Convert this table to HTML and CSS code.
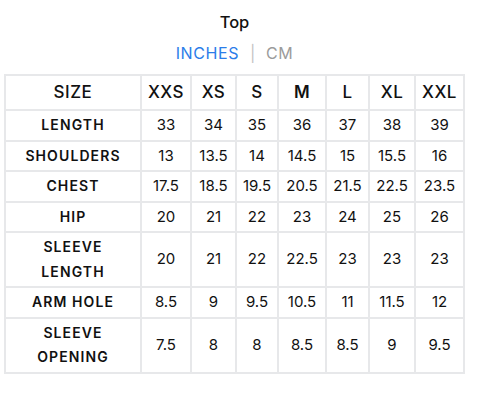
FILE: index.html
```html
<!DOCTYPE html>
<html>
<head>
<meta charset="utf-8">
<link rel="stylesheet" href="styles.css">
</head>
<body>
<div class="chart">
  <h1 class="title">Top</h1>
  <div class="units"><span class="unit active">INCHES</span><span class="sep">|</span><span class="unit">CM</span></div>
  <table class="sizes">
    <colgroup>
      <col class="c0"><col class="c1"><col class="c2"><col class="c3"><col class="c4"><col class="c5"><col class="c6"><col class="c7">
    </colgroup>
    <thead>
      <tr><th>SIZE</th><th>XXS</th><th>XS</th><th>S</th><th class="strong">M</th><th>L</th><th>XL</th><th>XXL</th></tr>
    </thead>
    <tbody>
      <tr><th>LENGTH</th><td>33</td><td>34</td><td>35</td><td>36</td><td>37</td><td>38</td><td>39</td></tr>
      <tr><th>SHOULDERS</th><td>13</td><td>13.5</td><td>14</td><td>14.5</td><td>15</td><td>15.5</td><td>16</td></tr>
      <tr><th>CHEST</th><td>17.5</td><td>18.5</td><td>19.5</td><td>20.5</td><td>21.5</td><td>22.5</td><td>23.5</td></tr>
      <tr><th>HIP</th><td>20</td><td>21</td><td>22</td><td>23</td><td>24</td><td>25</td><td>26</td></tr>
      <tr><th>SLEEVE<br>LENGTH</th><td>20</td><td>21</td><td>22</td><td>22.5</td><td>23</td><td>23</td><td>23</td></tr>
      <tr><th>ARM HOLE</th><td>8.5</td><td>9</td><td>9.5</td><td>10.5</td><td>11</td><td>11.5</td><td>12</td></tr>
      <tr><th>SLEEVE<br>OPENING</th><td>7.5</td><td>8</td><td>8</td><td>8.5</td><td>8.5</td><td>9</td><td>9.5</td></tr>
    </tbody>
  </table>
</div>
</body>
</html>
```
FILE: styles.css
```css
html, body {
  margin: 0;
  padding: 0;
  background: #fff;
}
body {
  font-family: Inter, "Liberation Sans", sans-serif;
  color: #111;
}
.chart {
  padding: 12px 0 0 4px;
  width: 461px;
}
.title {
  margin: 0;
  font-size: 16.5px;
  font-weight: 500;
  line-height: 20px;
  text-align: center;
  color: #111;
}
.units {
  margin-top: 11px;
  height: 20px;
  line-height: 20px;
  text-align: center;
  font-size: 16px;
  letter-spacing: 0.6px;
}
.unit {
  color: #9b9b9b;
}
.unit.active {
  color: #2b7de9;
}
.sep {
  color: #c4c4c4;
  margin: 0 10px 0 11px;
}
.sizes {
  margin-top: 11px;
  table-layout: fixed;
  width: 461px;
  border-collapse: separate;
  border-spacing: 2px;
  background: #e7e8ea;
}
.c0 { width: 134px; }
.c1 { width: 48px; }
.c2 { width: 43px; }
.c3 { width: 40px; }
.c4 { width: 46px; }
.c5 { width: 41px; }
.c6 { width: 44px; }
.c7 { width: 47px; }
.sizes th, .sizes td {
  background: #fff;
  text-align: center;
  padding: 2px 0;
  line-height: 24.5px;
  white-space: nowrap;
}
.sizes thead th {
  height: 33px;
  padding: 0;
  font-size: 17px;
  font-weight: 500;
  letter-spacing: 0.5px;
}
.sizes thead th.strong {
  font-weight: 600;
}
.sizes tbody th {
  font-size: 14px;
  font-weight: 600;
  letter-spacing: 1.1px;
}
.sizes td {
  font-size: 15px;
  font-weight: 400;
}
```
